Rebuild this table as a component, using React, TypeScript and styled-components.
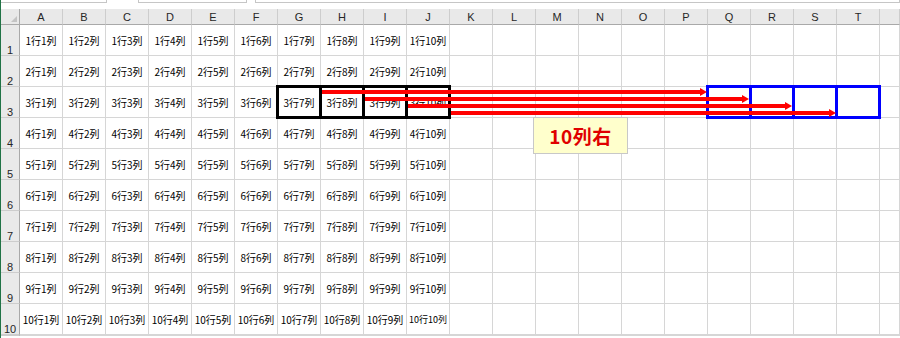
import React from 'react'
import styled, { createGlobalStyle, css } from 'styled-components'

const COLUMNS = 'ABCDEFGHIJKLMNOPQRST'.split('')
const ROWS = [1, 2, 3, 4, 5, 6, 7, 8, 9, 10]
const FILLED_COLS = 10

// selection frames on row 3
const BLACK_FRAME = ['G', 'H', 'I', 'J']
const BLUE_FRAME = ['Q', 'R', 'S', 'T']

// move arrows: start x, tip x, centre y
const ARROWS = [
  { from: 322, to: 707, y: 92 },
  { from: 365, to: 749, y: 99 },
  { from: 408, to: 792, y: 106 },
  { from: 451, to: 836, y: 113 },
]

const GlobalStyle = createGlobalStyle`
  html, body {
    margin: 0;
    padding: 0;
    background: #fff;
    overflow: hidden;
  }
  body {
    font-family: "Noto Sans CJK JP", "Liberation Sans", sans-serif;
  }
`

const Window = styled.div`
  position: relative;
  width: 900px;
  height: 338px;
  overflow: hidden;
  box-sizing: border-box;
  border-left: 1px solid #217346;
  background: #fff;
`

const TopStrip = styled.div`
  display: flex;
  height: 9px;
  align-items: flex-start;
`

const FieldBox = styled.div<{ $width: number; $gap?: number }>`
  box-sizing: border-box;
  width: ${p => p.$width}px;
  margin-left: ${p => p.$gap ?? 0}px;
  height: 3px;
  background: #fff;
  border-bottom: 1px solid #c6c6c6;
  border-left: ${p => (p.$gap ? '1px solid #c6c6c6' : 'none')};
  border-right: 1px solid #c6c6c6;
`

const Sheet = styled.div`
  display: grid;
  grid-template-columns: 19px repeat(20, 43px) 1fr;
  grid-template-rows: 16px repeat(10, 31px) 1fr;
`

const Corner = styled.div`
  position: relative;
  box-sizing: border-box;
  background: #e9e9e9;
  border-right: 1px solid #a9a9a9;
  border-bottom: 1px solid #a9a9a9;

  &::after {
    content: '';
    position: absolute;
    right: 2px;
    bottom: 2px;
    border-left: 6px solid transparent;
    border-bottom: 6px solid #c4c4c4;
  }
`

const ColHead = styled.div`
  box-sizing: border-box;
  display: flex;
  align-items: center;
  justify-content: center;
  background: #e9e9e9;
  border-right: 1px solid #cdcdcd;
  border-bottom: 1px solid #a9a9a9;
  font-family: "Liberation Sans", sans-serif;
  font-size: 11px;
  color: #262626;
`

const RowHead = styled.div`
  box-sizing: border-box;
  display: flex;
  align-items: flex-end;
  justify-content: center;
  background: #e9e9e9;
  border-right: 1px solid #a9a9a9;
  border-bottom: 1px solid #cdcdcd;
  font-family: "Liberation Sans", sans-serif;
  font-size: 11px;
  line-height: 10px;
  color: #262626;
`

const frameColors = { black: '#000', blue: '#0000ff' }

const Cell = styled.div<{ $frame?: 'black' | 'blue'; $small?: boolean }>`
  position: relative;
  box-sizing: border-box;
  display: flex;
  align-items: center;
  justify-content: center;
  border-right: 1px solid #d6d6d6;
  border-bottom: 1px solid #d6d6d6;
  font-size: ${p => (p.$small ? '9px' : '10px')};
  white-space: nowrap;
  color: #000;

  ${p =>
    p.$frame &&
    css`
      &::after {
        content: '';
        position: absolute;
        top: -2px;
        left: -2px;
        right: -2px;
        bottom: -2px;
        border: 3px solid ${frameColors[p.$frame]};
        z-index: 1;
      }
    `}
`

const Overlay = styled.svg`
  position: absolute;
  top: 0;
  left: 0;
  z-index: 2;
  pointer-events: none;
`

const Callout = styled.div`
  position: absolute;
  left: 532px;
  top: 117px;
  width: 95px;
  height: 37px;
  box-sizing: border-box;
  display: flex;
  align-items: center;
  justify-content: center;
  background: #ffffcc;
  border: 1px solid #c8c8c8;
  color: #e00000;
  font-family: "Noto Sans CJK JP", sans-serif;
  font-weight: bold;
  font-size: 19px;
  letter-spacing: 0.5px;
  z-index: 3;
`

const frameFor = (row: number, col: string): 'black' | 'blue' | undefined => {
  if (row !== 3) return undefined
  if (BLACK_FRAME.includes(col)) return 'black'
  if (BLUE_FRAME.includes(col)) return 'blue'
  return undefined
}

const Arrow: React.FC<{ from: number; to: number; y: number }> = ({ from, to, y }) => (
  <g fill="#ff0000">
    <rect x={from} y={y - 2} width={to - from - 6} height={4} />
    <polygon points={`${to - 7},${y - 4} ${to},${y} ${to - 7},${y + 4}`} />
  </g>
)

const App: React.FC = () => {
  return (
    <>
      <GlobalStyle />
      <Window>
        <TopStrip>
          <FieldBox $width={107} />
          <FieldBox $width={110} $gap={31} />
          <FieldBox $width={650} $gap={8} />
        </TopStrip>

        <Sheet>
          <Corner />
          {COLUMNS.map(c => (
            <ColHead key={c}>{c}</ColHead>
          ))}
          <ColHead />

          {ROWS.map(r => (
            <React.Fragment key={r}>
              <RowHead>{r}</RowHead>
              {COLUMNS.map((c, i) => (
                <Cell key={c} $frame={frameFor(r, c)} $small={r === 10 && i === 9}>
                  {i < FILLED_COLS ? `${r}行${i + 1}列` : ''}
                </Cell>
              ))}
              <Cell />
            </React.Fragment>
          ))}

          <RowHead />
          {COLUMNS.map(c => (
            <Cell key={c} />
          ))}
          <Cell />
        </Sheet>

        <Overlay width={899} height={338} viewBox="1 0 899 338">
          {ARROWS.map(a => (
            <Arrow key={a.y} {...a} />
          ))}
        </Overlay>

        <Callout>10列右</Callout>
      </Window>
    </>
  )
}

export default App
